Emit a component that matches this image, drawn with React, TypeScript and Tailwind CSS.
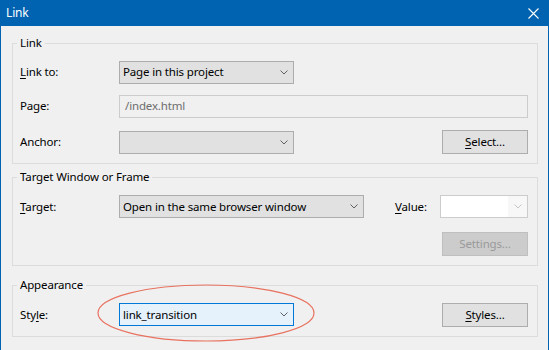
import React from "react";

function Chevron({ color = "#606060" }: { color?: string }) {
  return (
    <svg width="8" height="5" viewBox="0 0 8 5" className="shrink-0">
      <path d="M0.5 0.5 L4 4 L7.5 0.5" fill="none" stroke={color} strokeWidth="1" />
    </svg>
  );
}

function Dropdown({
  width,
  text,
  focused = false,
}: {
  width: string;
  text?: string;
  focused?: boolean;
}) {
  return (
    <div
      className={`${width} h-[23px] flex items-center justify-between pl-[3px] pr-[5px] border ${
        focused ? "border-[#0078d7] bg-[#e5f1fb]" : "border-[#adadad] bg-[#e1e1e1]"
      }`}
    >
      <span className="text-black">{text}</span>
      <Chevron />
    </div>
  );
}

function Button({ children, disabled = false }: { children: React.ReactNode; disabled?: boolean }) {
  return (
    <button
      className={`w-[86px] h-[24px] border flex items-center justify-center ${
        disabled ? "border-[#bfbfbf] bg-[#cccccc] text-[#9a9a9a]" : "border-[#adadad] bg-[#e1e1e1] text-black"
      }`}
    >
      {children}
    </button>
  );
}

function Group({ title, className, children }: { title: string; className: string; children: React.ReactNode }) {
  return (
    <fieldset className={`border border-[#dcdcdc] pl-[7px] pr-[9px] ${className}`}>
      <legend className="-ml-[3px] px-[3px] leading-4 text-black">{title}</legend>
      {children}
    </fieldset>
  );
}

export default function App() {
  return (
    <div
      className="relative w-[549px] h-[350px] bg-[#f0f0f0] border-x border-[#0063b1] flex flex-col text-[11.5px] tracking-[-0.15px] text-black overflow-hidden"
      style={{ fontFamily: '"Noto Sans", sans-serif' }}
    >
      {/* title bar */}
      <div className="h-[26px] -mx-px bg-[#0063b1] flex items-center justify-between pl-[6px] pr-[10px] text-white text-[12px] shrink-0">
        <span>Link</span>
        <svg width="11" height="11" viewBox="0 0 11 11">
          <path d="M0.5 0.5 L10.5 10.5 M10.5 0.5 L0.5 10.5" stroke="white" strokeWidth="1.1" />
        </svg>
      </div>

      <div className="flex flex-col pt-[9px] pl-[11px] pr-[10px]">
        <Group title="Link" className="pt-[10px] pb-[9px]">
          <div className="flex items-center h-[22px]">
            <span className="w-[99px]">
              <u className="underline-offset-2">L</u>ink to:
            </span>
            <Dropdown width="w-[175px]" text="Page in this project" />
          </div>
          <div className="flex items-center h-[22px] mt-[12px]">
            <span className="w-[99px]">Page:</span>
            <div className="flex-1 h-[23px] flex items-center pl-[5px] border border-[#cccccc] bg-[#f0f0f0] text-[#6d6d6d]">
              /index.html
            </div>
          </div>
          <div className="flex items-center justify-between h-[24px] mt-[13px]">
            <div className="flex items-center">
              <span className="w-[99px]">Anchor:</span>
              <Dropdown width="w-[175px]" />
            </div>
            <Button>
              <u className="underline-offset-2">S</u>elect...
            </Button>
          </div>
        </Group>

        <Group title="Target Window or Frame" className="mt-[5px] pt-[10px] pb-[9px]">
          <div className="flex items-center h-[23px]">
            <span className="w-[99px]">
              <u className="underline-offset-2">T</u>arget:
            </span>
            <Dropdown width="w-[245px]" text="Open in the same browser window" />
            <span className="ml-[31px] w-[45px]">
              <u className="underline-offset-2">V</u>alue:
            </span>
            <div className="w-[88px] h-[23px] flex items-center border border-[#cccccc] bg-white">
              <div className="flex-1 h-full bg-white" />
              <div className="w-[19px] h-full bg-[#f7f7f7] flex items-center justify-center">
                <Chevron color="#c4c4c4" />
              </div>
            </div>
          </div>
          <div className="flex justify-end mt-[14px]">
            <Button disabled>Settings...</Button>
          </div>
        </Group>

        <Group title="Appearance" className="mt-[11px] pt-[10px] pb-[10px]">
          <div className="flex items-center justify-between h-[23px]">
            <div className="flex items-center">
              <span className="w-[99px]">
                Sty<u className="underline-offset-2">l</u>e:
              </span>
              <Dropdown width="w-[175px]" text="link_transition" focused />
            </div>
            <Button>
              <u className="underline-offset-2">S</u>tyles...
            </Button>
          </div>
        </Group>
      </div>

      {/* red annotation ellipse */}
      <svg className="absolute left-0 top-0 pointer-events-none" width="549" height="350">
        <ellipse cx="205" cy="313" rx="108" ry="28" fill="none" stroke="#e8725f" strokeWidth="1.2" />
      </svg>
    </div>
  );
}
